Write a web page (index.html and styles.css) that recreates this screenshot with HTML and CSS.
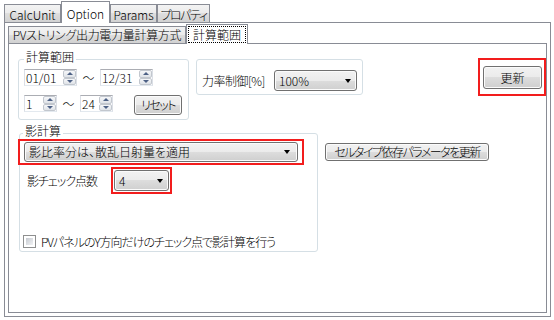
FILE: index.html
```html
<!DOCTYPE html>
<html lang="ja">
<head>
    <meta charset="UTF-8">
    <title>Option</title>
    <link rel="stylesheet" href="styles.css">
</head>
<body>

<div class="tabs outer-tabs">
    <div class="tab tab-calc">CalcUnit</div>
    <div class="tab tab-option selected">Option</div>
    <div class="tab tab-params">Params</div>
    <div class="tab tab-prop">プロパティ</div>
</div>

<div class="outer-panel">
    <div class="tabs inner-tabs">
        <div class="tab tab-pv">PVストリング出力電力量計算方式</div>
        <div class="tab tab-range selected"><span class="focus">計算範囲</span></div>
    </div>

    <div class="inner-panel">
        <div class="top-row">
            <fieldset class="group range-group">
                <legend>計算範囲</legend>
                <div class="line">
                    <span class="spinbox date"><span class="value">01/01</span><span class="spin"><i class="up"></i><i class="down"></i></span></span>
                    <span class="tilde">〜</span>
                    <span class="spinbox date"><span class="value">12/31</span><span class="spin"><i class="up"></i><i class="down"></i></span></span>
                </div>
                <div class="line second-line">
                    <span class="spinbox hour"><span class="value">1</span><span class="spin"><i class="up"></i><i class="down"></i></span></span>
                    <span class="tilde">〜</span>
                    <span class="spinbox hour"><span class="value">24</span><span class="spin"><i class="up"></i><i class="down"></i></span></span>
                    <span class="button reset-btn">リセット</span>
                </div>
            </fieldset>

            <fieldset class="group power-group">
                <span class="power-label">力率制御[%]</span>
                <span class="combo power-combo"><span>100%</span><i class="arrow"></i></span>
            </fieldset>

            <div class="mark update-mark">
                <span class="button update-btn">更新</span>
            </div>
        </div>

        <div class="bottom-row">
            <fieldset class="group shadow-group">
                <legend>影計算</legend>
                <div class="mark shadow-mark">
                    <span class="combo shadow-combo"><span>影比率分は、散乱日射量を適用</span><i class="arrow"></i></span>
                </div>
                <div class="points-line">
                    <span class="points-label">影チェック点数</span>
                    <div class="mark points-mark">
                        <span class="combo points-combo"><span>4</span><i class="arrow"></i></span>
                    </div>
                </div>
                <div class="check-line">
                    <span class="checkbox"></span>
                    <span class="check-label">PVパネルのY方向だけのチェック点で影計算を行う</span>
                </div>
            </fieldset>

            <span class="button cell-btn">セルタイプ依存パラメータを更新</span>
        </div>
    </div>
</div>

</body>
</html>
```

FILE: styles.css
```css
body {
    margin: 0;
    background: #fff;
    color: #000;
    font-family: "Noto Sans CJK JP", sans-serif;
    font-size: 12px;
    font-weight: 300;
    line-height: 14px;
    font-feature-settings: "palt";
}

/* tab strips */
.tabs {
    display: flex;
    align-items: flex-end;
}

.outer-tabs {
    height: 22px;
    padding-left: 4px;
}

.tab {
    box-sizing: border-box;
    height: 18px;
    padding-top: 2px;
    border: 1px solid #898c95;
    border-bottom: none;
    background: linear-gradient(#f3f3f3, #ebebeb 50%, #dedede 50%, #d2d2d2);
    text-align: center;
    line-height: 15px;
    white-space: nowrap;
}

.tab.selected {
    position: relative;
    z-index: 1;
    height: 22px;
    margin-bottom: -1px;
    padding-top: 4px;
    background: #fff;
}

.tab-calc { width: 57px; }
.tab-option { width: 49px; }
.tab-params { width: 47px; }
.tab-prop { width: 53px; letter-spacing: -1.5px; }

.outer-panel {
    box-sizing: border-box;
    width: 547px;
    height: 295px;
    margin-left: 4px;
    padding: 1px 3px 3px;
    border: 1px solid #898c95;
}

.inner-tabs {
    height: 19px;
}

.inner-tabs .tab {
    height: 17px;
    padding-top: 0;
}

.inner-tabs .tab.selected {
    height: 20px;
    padding: 1px 1px 0;
}

.tab-pv { width: 178px; letter-spacing: -0.3px; }
.tab-range { width: 62px; }

.focus {
    display: block;
    height: 17px;
    box-sizing: border-box;
    border: 1px dotted #000;
    line-height: 15px;
}

.inner-panel {
    box-sizing: border-box;
    width: 539px;
    height: 270px;
    padding: 6px 0 0 9px;
    border: 1px solid #898c95;
}

/* group boxes */
.group {
    box-sizing: border-box;
    margin: 0;
    border: 1px solid #d5dfe5;
    border-radius: 3px;
}

.group legend {
    padding: 0 2px 4px;
    line-height: 14px;
}

.top-row {
    display: flex;
    align-items: flex-start;
}

.range-group {
    width: 171px;
    padding: 1px 4px 4px 5px;
}

.line {
    display: flex;
    align-items: flex-start;
    height: 17px;
}

.second-line {
    height: 20px;
    margin-top: 9px;
}

.tilde {
    width: 23px;
    text-align: center;
    line-height: 17px;
}

.spinbox {
    box-sizing: border-box;
    display: flex;
    height: 17px;
    border: 1px solid #dbdfe6;
    border-top-color: #abadb3;
    border-bottom-color: #e3e9ef;
    background: #fff;
}

.spinbox.date { width: 53px; }
.spinbox.hour { width: 33px; }

.spinbox .value {
    flex: 1;
    padding-left: 1px;
    line-height: 15px;
}

.spin {
    display: flex;
    flex-direction: column;
    width: 13px;
}

.spin i {
    flex: 1;
    box-sizing: border-box;
    display: flex;
    align-items: center;
    justify-content: center;
    border: 1px solid #c2c7ce;
    border-radius: 2px;
    background: linear-gradient(#f6f7f9, #dfe3e8);
}

.spin i::before {
    content: "";
    border-left: 3px solid transparent;
    border-right: 3px solid transparent;
}

.spin .up::before { border-bottom: 3px solid #4d6185; }
.spin .down::before { border-top: 3px solid #4d6185; }

.button, .combo {
    box-sizing: border-box;
    display: flex;
    align-items: center;
    border: 1px solid #707070;
    border-radius: 3px;
    background: linear-gradient(#f2f2f2, #ebebeb 50%, #dddddd 50%, #cfcfcf);
    box-shadow: inset 0 0 0 1px #fbfbfb;
    white-space: nowrap;
}

.button {
    justify-content: center;
}

.reset-btn {
    width: 48px;
    height: 20px;
    margin-left: 21px;
    letter-spacing: -1.5px;
}

.combo {
    justify-content: space-between;
    padding: 0 5px 0 4px;
}

.arrow {
    border-top: 4px solid #000;
    border-left: 3px solid transparent;
    border-right: 3px solid transparent;
}

.power-group {
    display: flex;
    align-items: center;
    width: 167px;
    margin-top: 9px;
    margin-left: 7px;
    padding: 10px 5px 3px;
}

.power-label {
    letter-spacing: -0.5px;
}

.power-combo {
    width: 83px;
    height: 21px;
    margin-left: auto;
}

/* red marks drawn round the controls */
.mark {
    box-sizing: border-box;
    border: 2px solid #f21d1d;
}

.update-mark {
    margin-left: auto;
    margin-top: 8px;
    padding: 6px 2px 5px 3px;
}

.update-btn {
    width: 59px;
    height: 23px;
}

.bottom-row {
    display: flex;
    align-items: flex-start;
    margin-top: 4px;
    margin-left: 1px;
}

.shadow-group {
    width: 299px;
    padding: 0 0 3px;
}

.shadow-group legend {
    margin-left: 3px;
}

.shadow-mark {
    width: 286px;
    margin: -3px 0 0 -2px;
    padding: 1px 4px;
}

.shadow-combo {
    height: 20px;
    padding-right: 7px;
}

.points-line {
    display: flex;
    align-items: center;
    margin-top: 2px;
}

.points-label {
    width: 84px;
    margin-left: 7px;
    letter-spacing: -1px;
}

.points-mark {
    padding: 1px;
}

.points-combo {
    width: 55px;
    height: 21px;
}

.check-line {
    display: flex;
    align-items: center;
    height: 13px;
    margin-top: 41px;
    margin-left: 3px;
    line-height: 13px;
}

.check-label {
    letter-spacing: -1px;
}

.checkbox {
    box-sizing: border-box;
    width: 13px;
    height: 13px;
    margin-right: 5px;
    padding: 2px;
    border: 1px solid #8e8f8f;
    background: linear-gradient(135deg, #c6cad0, #f1f2f4) content-box, #fff;
}

.cell-btn {
    width: 164px;
    height: 18px;
    margin-top: 19px;
    margin-left: 7px;
    letter-spacing: -1.5px;
}
```
